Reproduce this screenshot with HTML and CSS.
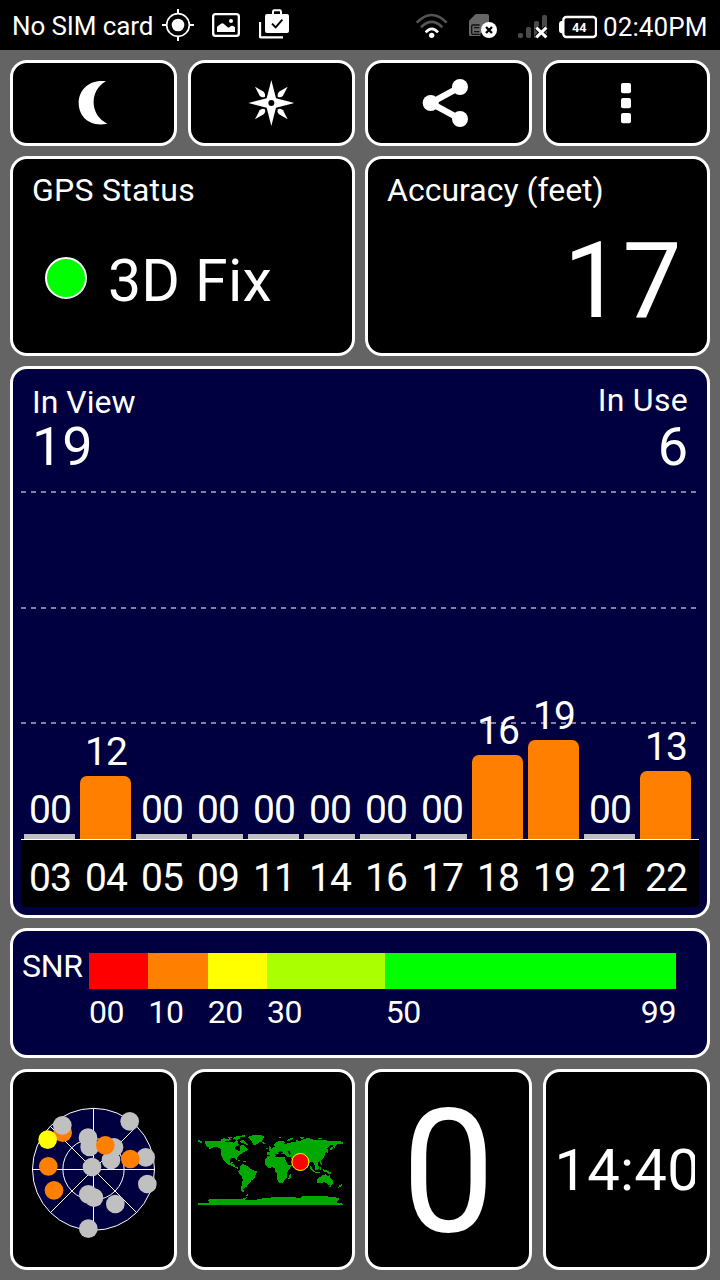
FILE: index.html
```html
<!DOCTYPE html>
<html lang="en">
<head>
    <meta charset="UTF-8">
    <meta name="viewport" content="width=device-width, initial-scale=1.0">
    <title>GPS Test</title>
    <link rel="stylesheet" href="styles.css">
</head>
<body>

    <!-- Status bar -->
    <div class="statusbar">
        <span class="carrier">No SIM card</span>
        <svg class="icon-location" viewBox="486 0 96 150">
            <circle cx="534" cy="75" r="34" fill="none" stroke="#fff" stroke-width="5"/>
            <circle cx="534" cy="75" r="19" fill="#fff"/>
            <path d="M534 27v14M534 109v14M486 75h14M568 75h14" stroke="#fff" stroke-width="6"/>
        </svg>
        <svg class="icon-picture" viewBox="636 0 84 150">
            <rect x="639.500" y="42.500" width="77" height="65" rx="7" fill="none" stroke="#fff" stroke-width="7"/>
            <path d="M651 96V82q0-3 4-5l8-6q4-3 8 0l12 11q3 2 6-1l4-3q4-2 7 0l5 4v14z" fill="#fff"/>
            <circle cx="693" cy="63" r="6" fill="#fff"/>
        </svg>
        <svg class="icon-bag" viewBox="777 0 90 150">
            <path d="M780 66v44q0 2 3 2h66" fill="none" stroke="#fff" stroke-width="7"/>
            <path d="M819 42v-7q0-4 4-4h16q4 0 4 4v7" fill="none" stroke="#fff" stroke-width="6"/>
            <rect x="795" y="42" width="72" height="57" rx="6" fill="#fff"/>
            <path d="M816 71l11 11 20-23" fill="none" stroke="#000" stroke-width="6"/>
        </svg>
        <div class="spacer"></div>
        <svg class="icon-wifi" viewBox="168 0 96 150">
            <g fill="none" stroke-width="8">
                <path d="M170 68Q215 22 260 68" stroke="#555"/>
                <path d="M183 82Q215 49 247 82" stroke="#555"/>
                <path d="M197 97Q215 76 234 97" stroke="#fff"/>
            </g>
            <circle cx="215" cy="106" r="8" fill="#fff"/>
        </svg>
        <svg class="icon-sim" viewBox="327 0 87 150">
            <path d="M327 62l20-20h34q6 0 6 6v20l-26 34v6h-30q-4 0-4-4z" fill="#666"/>
            <path d="M359 75h-20q-4 0-4 4v20q0 4 4 4h20M342 83h16M342 95h16" fill="none" stroke="#111" stroke-width="4"/>
            <circle cx="387" cy="90" r="24" fill="#fff"/>
            <path d="M378 81l18 18M396 81l-18 18" stroke="#000" stroke-width="7"/>
        </svg>
        <svg class="icon-signal" viewBox="471 0 93 150">
            <g fill="#4a4a4a">
                <rect x="474" y="99" width="15" height="15" rx="5"/>
                <rect x="498" y="81" width="15" height="33" rx="5"/>
                <rect x="522" y="63" width="15" height="51" rx="5"/>
                <rect x="546" y="45" width="15" height="69" rx="5"/>
            </g>
            <path d="M529 83l30 29M559 83l-30 29" stroke="#000" stroke-width="15"/>
            <path d="M529 83l30 29M559 83l-30 29" stroke="#fff" stroke-width="9"/>
        </svg>
        <svg class="icon-battery" viewBox="597 0 114 150">
            <path d="M609 63h-6q-6 2-6 9v19q0 7 6 9h6z" fill="#fff"/>
            <rect x="610" y="51" width="98" height="60" rx="9" fill="none" stroke="#fff" stroke-width="7"/>
            <text class="battery-level" x="658" y="95">44</text>
        </svg>
        <span class="clock">02:40PM</span>
    </div>

    <div class="dashboard">

        <!-- Top buttons -->
        <div class="row row-buttons">
            <div class="card">
                <svg viewBox="39 189 483 240">
                    <path d="M318 244C265 238 236 272 236 309C236 350 269 382 322 371C268 346 268 270 318 244z" fill="#fff"/>
                </svg>
            </div>
            <div class="card">
                <svg viewBox="572 189 483 240">
                    <g fill="#fff">
                        <path d="M813 240L827 295L882 309L827 323L813 378L799 323L744 309L799 295z"/>
                        <path d="M764 260L790 275Q797 283 794 290Q785 295 778 287z"/>
                        <path d="M862 260L836 275Q829 283 832 290Q841 295 848 287z"/>
                        <path d="M764 358L790 343Q797 335 794 328Q785 323 778 331z"/>
                        <path d="M862 358L836 343Q829 335 832 328Q841 323 848 331z"/>
                    </g>
                    <circle cx="813" cy="309" r="9"/>
                </svg>
            </div>
            <div class="card">
                <svg viewBox="25 189 483 240">
                    <path d="M301 261L213 309L301 357" fill="none" stroke="#fff" stroke-width="19"/>
                    <g fill="#fff">
                        <circle cx="213" cy="309" r="24"/>
                        <circle cx="301" cy="261" r="24"/>
                        <circle cx="301" cy="357" r="24"/>
                    </g>
                </svg>
            </div>
            <div class="card">
                <svg viewBox="558 189 483 240">
                    <g fill="#fff">
                        <rect x="783" y="249" width="30" height="31" rx="6"/>
                        <rect x="783" y="294" width="30" height="31" rx="6"/>
                        <rect x="783" y="339" width="30" height="31" rx="6"/>
                    </g>
                </svg>
            </div>
        </div>

        <!-- Fix and accuracy -->
        <div class="row row-status">
            <div class="card panel">
                <div class="label label-status">GPS Status</div>
                <div class="fix">
                    <span class="fix-light"></span>
                    <span class="fix-text">3D Fix</span>
                </div>
            </div>
            <div class="card panel">
                <div class="label">Accuracy (feet)</div>
                <div class="accuracy">17</div>
            </div>
        </div>

        <!-- Satellite signal chart -->
        <div class="card chart">
            <div class="chart-head">
                <div class="in-view">
                    <div class="label">In View</div>
                    <div class="count">19</div>
                </div>
                <div class="in-use">
                    <div class="label">In Use</div>
                    <div class="count">6</div>
                </div>
            </div>
            <div class="plot">
                <div class="sat"><span>00</span><div class="bar none"></div></div>
                <div class="sat"><span>12</span><div class="bar" style="height: 63px"></div></div>
                <div class="sat"><span>00</span><div class="bar none"></div></div>
                <div class="sat"><span>00</span><div class="bar none"></div></div>
                <div class="sat"><span>00</span><div class="bar none"></div></div>
                <div class="sat"><span>00</span><div class="bar none"></div></div>
                <div class="sat"><span>00</span><div class="bar none"></div></div>
                <div class="sat"><span>00</span><div class="bar none"></div></div>
                <div class="sat"><span>16</span><div class="bar" style="height: 84px"></div></div>
                <div class="sat"><span>19</span><div class="bar" style="height: 99px"></div></div>
                <div class="sat"><span>00</span><div class="bar none"></div></div>
                <div class="sat"><span>13</span><div class="bar" style="height: 68px"></div></div>
            </div>
            <div class="sat-ids">
                <span>03</span><span>04</span><span>05</span><span>09</span><span>11</span><span>14</span>
                <span>16</span><span>17</span><span>18</span><span>19</span><span>21</span><span>22</span>
            </div>
        </div>

        <!-- SNR scale -->
        <div class="card snr">
            <div class="snr-label">SNR</div>
            <div class="snr-scale">
                <div class="snr-colors">
                    <div class="red"></div>
                    <div class="orange"></div>
                    <div class="yellow"></div>
                    <div class="lime"></div>
                    <div class="green"></div>
                </div>
                <div class="snr-ticks">
                    <span class="w10">00</span>
                    <span class="w10">10</span>
                    <span class="w10">20</span>
                    <span class="w20">30</span>
                    <span class="w49">50</span>
                    <span>99</span>
                </div>
            </div>
        </div>

        <!-- Bottom tiles -->
        <div class="row row-tiles">
            <div class="card">
                <svg viewBox="9 -39 483 585">
                    <g stroke="#fff" stroke-width="3">
                        <circle cx="250.500" cy="253" r="183" fill="#000040"/>
                        <circle cx="250.500" cy="253" r="92" fill="none"/>
                        <path d="M67 253.500h367M250.500 70v366M121 124l259 259M380 124L121 383"/>
                    </g>
                    <circle cx="158" cy="143" r="28" fill="#ff8000"/>
                    <circle cx="113" cy="164" r="28" fill="#ff0"/>
                    <g fill="#c0c0c0">
                        <circle cx="157" cy="121" r="28"/>
                        <circle cx="359" cy="109" r="28"/>
                        <circle cx="234" cy="158" r="28"/>
                        <circle cx="239" cy="186" r="28"/>
                        <circle cx="312" cy="187" r="28"/>
                        <circle cx="303" cy="225" r="28"/>
                        <circle cx="407" cy="217" r="28"/>
                        <circle cx="246" cy="246" r="28"/>
                        <circle cx="412" cy="297" r="28"/>
                        <circle cx="235" cy="328" r="28"/>
                        <circle cx="252" cy="338" r="28"/>
                        <circle cx="316" cy="357" r="28"/>
                        <circle cx="235" cy="431" r="28"/>
                    </g>
                    <g fill="#ff8000">
                        <circle cx="286" cy="181" r="28"/>
                        <circle cx="361" cy="222" r="28"/>
                        <circle cx="115" cy="244" r="28"/>
                        <circle cx="132" cy="316" r="28"/>
                    </g>
                </svg>
            </div>
            <div class="card">
                <svg viewBox="17 -144 483 585">
                    <g fill="#00a800" shape-rendering="crispEdges">
                        <!-- Americas -->
                        <path d="M39 60h5v3h6v5h-5v-3h-6zM57 66l9-4 16 0 18 2 16 0 10 3 12-1 8 3 8-9 4 4-2 6 6 2-4 4-7 3-3 6 9 6 5 2 3-6-1-8 5-5 8 3 4 6 6 6-2 3-8 3-8 6-9 6-6 5 0 9-5-6-11 0-5 6 2 8 7-3-1 5 6 1 1 7 8 3 4 2-4 2-8-4-9-5-7-2-9-5-8-9-6-11-2-10 1-10-8-7-12-2-10 4-12 4 8-6-8-2z"/>
                        <path d="M106 57l12-3 4 5 10-4 6 5-12 3-18 0zM126 52l10-2 6 3-12 3zM142 54l8-4 16 1-4 6-10 3zM152 49l20-3 14 1-12 4-16 1zM164 62l8-2 9 5 9 10-6 1-8-6-9-2zM154 119l10 2 7 3-9 0zM173 124h8v3h-8z"/>
                        <path d="M186 51l14-5 22-1 16 3-5 9-3 8-9 2-6 5-5 5-5-2-5-10-8-8z"/>
                        <path d="M164 138l8-6 10 4 6 4 5 6 9 4 13 5-4 10-4 12-10 5-5 9-6 4-2 6-7 2-4 6 5 4-2 4-9-4 0-12 4-10 1-14-4-10-7-8-2-6 4-5z"/>
                        <!-- Europe and Asia -->
                        <path d="M246 105l0-9 8-1-3-6 7-2 6-6 6 0-5-6 10-9 11-4 14 4-6 5 10 0 14-4 12 0 5-8 5 6 12-6 16-5 12 4 14 2 24 0 16 3 18 0 21 2 0 6-14 0-7 6-6 8-3-9-10 0-7 8 2 10-8 4-5 6 2 8-6 7-7 5-8 1 2 9-5 9-5-6-3-8-7-4-6 6-4 11-4 3-5-11-6-8-9-2-4 8-10 6-6-9-5-11-3-7-13-2-4-8-8 1-7-4-7 4-6 7z"/>
                        <path d="M250 76l5 3 3 10-8 1zM242 84h5v4h-5zM229 66l8 1 3 4-7 2zM280 50h8v3h-8zM306 62l6-6 10-3 1 3-12 7zM342 52l8-2 8 3-8 4zM398 54h12v3h-12zM415 103l5-3 0 6-9 5 1-4zM425 88l4 2-2 10-3-3zM434 84l5-4 5 3-8 9z"/>
                        <!-- Africa -->
                        <path d="M246 109l12-3 9-2 2 6 9 2 5-2 14 1 5 11 6 12 11 2-7 12-8 10 1 13-7 9-4 8-7 2-6 0-4-9-3-10 0-10-5-9 0-7-8-3-12 2-8-7-3-7 1-10z"/>
                        <path d="M311 167l7-6-1 9-3 8-5 0z"/>
                        <!-- Oceania -->
                        <path d="M372 138l5 2 8 12 4 4-4 1-9-10zM390 142l8-5 4 4-5 10-7 0zM404 142h4v8h-4zM403 122l5 4 2 10-4-3zM388 157h16v3h-16zM413 148l9 2 15 8 1 4-8-1-9-5-7-2zM394 178l9-6 7-6 8-1 3-3 5 7 7-4 3 9 6 8 0 9-6 6-7-1-5-7-8-2-13 3-8-1zM431 198h5v4h-5zM464 194l7-2-2 5-9 7-1-3z"/>
                        <!-- Antarctica -->
                        <path d="M39 249h30l3-5-6-3 12-5 30 1 34 1 28 0 8-5 7-1-3-5 5-4-1 10-9 6 23 1 14-1 25-5 26-2 39-1 22 1 18 2 7-5 28-2 34 2 31 1 18 5-5 8-4 6 21 2v5H39z"/>
                    </g>
                    <path d="M277 97l12-3 5 5-12 3zM307 94l6-2 3 9-3 6-3-8zM268 101l8 2 3 5-7-1z"/>
                    <circle cx="345" cy="126" r="25.500" fill="#f00" stroke="#ff0" stroke-width="3"/>
                </svg>
            </div>
            <div class="card speed"><span>0</span></div>
            <div class="card time"><span>14:40</span></div>
        </div>

    </div>
</body>
</html>
```
FILE: styles.css
```css
* {
    box-sizing: border-box;
    margin: 0;
    padding: 0;
}

body {
    width: 720px;
    height: 1280px;
    overflow: hidden;
    background-color: #646464;
    color: #fff;
    font-family: Roboto, 'Liberation Sans', sans-serif;
}

svg {
    display: block;
    flex: none;
}

/* Status bar */
.statusbar {
    display: flex;
    height: 50px;
    padding-left: 12px;
    padding-right: 11px;
    background-color: #000;
    font-size: 26px;
    line-height: 53px;
    white-space: nowrap;
}

.statusbar svg {
    height: 50px;
}

.carrier {
    width: 150px;
    letter-spacing: -0.1px;
}

.spacer {
    flex: 1;
}

.icon-location {
    width: 32px;
}

.icon-picture {
    width: 28px;
    margin-left: 18px;
}

.icon-bag {
    width: 30px;
    margin-left: 19px;
}

.icon-wifi {
    width: 32px;
}

.icon-sim {
    width: 29px;
    margin-left: 21px;
}

.icon-signal {
    width: 31px;
    margin-left: 19px;
}

.icon-battery {
    width: 38px;
    margin-left: 11px;
}

.battery-level {
    fill: #fff;
    font-size: 38px;
    font-weight: 700;
    text-anchor: middle;
}

.clock {
    width: 106px;
    margin-left: 6px;
    line-height: 55px;
    letter-spacing: 0.1px;
}

/* Cards */
.dashboard {
    display: flex;
    flex-direction: column;
    padding: 10px;
}

.row {
    display: flex;
    gap: 10.500px;
    margin-right: 0.500px;
}

.card {
    flex: 1;
    min-width: 0;
    overflow: hidden;
    background-color: #000;
    border: 3px solid #fff;
    border-radius: 17px;
}

.card > svg {
    width: 100%;
    height: 100%;
}

.row-buttons {
    height: 86px;
    margin-bottom: 10px;
}

.row-status {
    height: 200px;
    margin-bottom: 10px;
}

.label {
    font-size: 32px;
    line-height: 32px;
}

.label-status {
    letter-spacing: 0.25px;
}

.panel {
    padding: 15px 19px;
}

.fix {
    display: flex;
    align-items: center;
    margin-top: 45px;
    padding-left: 13px;
}

.fix-light {
    width: 42px;
    height: 42px;
    margin-top: -6px;
    background-color: #0f0;
    border: 2px solid #fff;
    border-radius: 50%;
}

.fix-text {
    margin-left: 21px;
    font-size: 59px;
    line-height: 60px;
    letter-spacing: 0.2px;
}

.accuracy {
    margin-top: 23px;
    padding-right: 6px;
    font-size: 105px;
    line-height: 105px;
    text-align: right;
}

/* Chart */
.chart {
    flex: none;
    height: 552px;
    margin-bottom: 10px;
    padding: 0 8px;
    background-color: #000040;
}

.chart-head {
    display: flex;
    justify-content: space-between;
    height: 122px;
    padding: 17px 11px 0;
}

.in-use {
    margin-top: -2px;
    text-align: right;
}

.in-use .label {
    letter-spacing: 0.3px;
}

.count {
    font-size: 54px;
    line-height: 54px;
    margin-top: 2px;
}

.in-use .count {
    margin-top: 4px;
}

.plot {
    display: flex;
    align-items: flex-end;
    height: 349px;
    border-bottom: 1px solid #fff;
    background-image:
        repeating-linear-gradient(90deg, #8080a0 0 5px, transparent 5px 10px),
        repeating-linear-gradient(90deg, #8080a0 0 5px, transparent 5px 10px),
        repeating-linear-gradient(90deg, #8080a0 0 5px, transparent 5px 10px);
    background-size: 675px 2px;
    background-position: 0 0, 0 116px, 0 231px;
    background-repeat: no-repeat;
}

.sat {
    width: 56px;
    padding: 0 2px 0 3px;
    text-align: center;
}

.sat span {
    display: block;
    font-size: 39px;
    line-height: 39px;
    letter-spacing: -0.8px;
    margin-right: -1px;
    margin-bottom: 4px;
}

.bar {
    background-color: #ff8000;
    border-radius: 7px 7px 0 0;
}

.bar.none {
    height: 5px;
    background-color: #c0c0c0;
    border-radius: 0;
}

.sat-ids {
    display: flex;
    height: 67px;
    padding-left: 1px;
    background-color: #000;
    font-size: 39px;
    line-height: 77px;
    letter-spacing: -0.8px;
}

.sat-ids span {
    width: 56px;
    text-align: center;
}

/* SNR */
.snr {
    display: flex;
    flex: none;
    height: 130px;
    margin-bottom: 11px;
    padding: 22px 31px 0 9px;
    background-color: #000040;
    font-size: 32px;
}

.snr-label {
    width: 67px;
    line-height: 26px;
    letter-spacing: -0.3px;
}

.snr-scale {
    flex: 1;
}

.snr-colors {
    display: flex;
    height: 36px;
}

.red { flex: 10; background-color: #f00; }
.orange { flex: 10; background-color: #ff8000; }
.yellow { flex: 10; background-color: #ff0; }
.lime { flex: 20; background-color: #af0; }
.green { flex: 49; background-color: #0f0; }

.snr-ticks {
    display: flex;
    line-height: 46px;
    letter-spacing: -0.4px;
}

.w10 { flex: 10 0 0; }
.w20 { flex: 20 0 0; }
.w49 { flex: 43 0 0; }

/* Bottom tiles */
.row-tiles {
    height: 201px;
}

.speed {
    overflow: visible;
    font-size: 173px;
    line-height: 200px;
    text-align: center;
}

.speed span {
    display: block;
    transform: scaleX(0.960);
}

.time {
    font-size: 58px;
    line-height: 196px;
    letter-spacing: 0.2px;
}

.time span {
    display: block;
    margin: 0 12px 0 9px;
    overflow: hidden;
}
```
